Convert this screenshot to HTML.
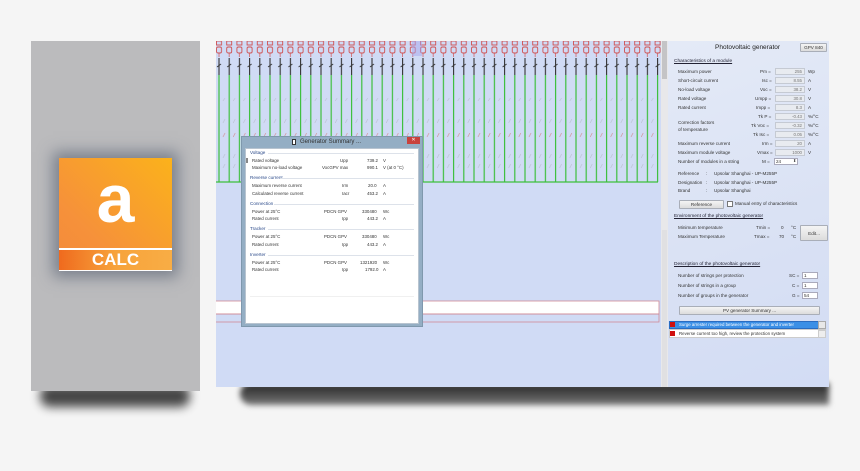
<!DOCTYPE html>
<html><head><meta charset="utf-8">
<style>
*{margin:0;padding:0;box-sizing:border-box}
body{width:860px;height:471px;background:#f5f5f5;position:relative;overflow:hidden;font-family:"Liberation Sans",sans-serif}
.a{position:absolute}
.t{position:absolute;font-size:4.6px;color:#333;white-space:nowrap;line-height:1}
.h{position:absolute;font-size:4.8px;color:#223;text-decoration:underline;white-space:nowrap;line-height:1}
.box{position:absolute;background:#e8ebf0;border:1px solid #c5cad3;height:7px;font-size:4.4px;color:#777;text-align:right;padding-right:2px;line-height:6px}
.btn{position:absolute;background:linear-gradient(#f4f4f4,#dcdcdc);border:1px solid #a9aeb8;border-radius:1px;font-size:4.6px;color:#333;text-align:center}
.dt{position:absolute;font-size:4.4px;color:#333;white-space:nowrap;line-height:1}
.ds{position:absolute;font-size:4.6px;color:#2b4a8a;white-space:nowrap;line-height:1}
.dl{position:absolute;height:1px;background:#dde2ea}
</style></head><body>
<!-- left panel -->
<div class="a" style="left:40px;top:385px;width:150px;height:22px;background:#333;filter:blur(5px);border-radius:10px;opacity:.9"></div>
<div class="a" style="left:31px;top:41px;width:169px;height:350px;background:#bbbbbd"></div>
<div class="a" style="left:59px;top:158px;width:113px;height:113px;box-shadow:0 0 14px 6px rgba(70,80,100,.55)"></div>
<div class="a" style="left:59px;top:158px;width:113px;height:113px;background:linear-gradient(225deg,#fbb21b,#f6913a 70%,#f38a3c)"></div>
<div class="a" style="left:59px;top:164px;width:113px;height:70px;text-align:center;color:#fff;font-weight:bold;font-size:68px;line-height:70px;font-family:'Liberation Sans',sans-serif">a</div>
<div class="a" style="left:59px;top:248px;width:113px;height:2px;background:#fff"></div>
<div class="a" style="left:59px;top:250px;width:113px;height:20px;background:linear-gradient(90deg,#ef6a1e,#f7a33b 50%,#f8ad45);color:#fff;font-weight:bold;font-size:17px;text-align:center;line-height:20px">CALC</div>
<div class="a" style="left:59px;top:270px;width:113px;height:1px;background:#fff"></div>

<!-- main shadow -->
<div class="a" style="left:240px;top:383px;width:589px;height:22px;background:linear-gradient(#222,#777);filter:blur(3px);border-radius:40px 0 0 40px"></div>
<!-- main screen -->
<div class="a" style="left:216px;top:41px;width:445px;height:346px;background:#d0dbf5;overflow:hidden">
<svg width="445" height="346" style="position:absolute;left:0;top:0">
<defs>
<pattern id="p" x="0" y="0" width="10.2" height="346" patternUnits="userSpaceOnUse">
<rect x="0.5" y="0" width="5" height="4" fill="none" stroke="#d05050" stroke-width="0.9"/>
<rect x="0.5" y="6" width="5" height="6" rx="1.5" fill="none" stroke="#d05050" stroke-width="0.9"/>
<line x1="3" y1="12" x2="3" y2="16" stroke="#d05050" stroke-width="0.7"/>
<line x1="3" y1="17" x2="3" y2="34" stroke="#333" stroke-width="1.1"/>
<line x1="1" y1="26" x2="5" y2="23" stroke="#333" stroke-width="0.8"/>
<line x1="3" y1="34" x2="3" y2="141" stroke="#3cbf3c" stroke-width="1.2"/>
<line x1="7" y1="60" x2="9" y2="57" stroke="#b8c0cc" stroke-width="0.6"/>
<line x1="7" y1="82" x2="9" y2="78" stroke="#b8c0cc" stroke-width="0.6"/>
<line x1="7" y1="96" x2="9" y2="92" stroke="#d08a8a" stroke-width="0.6"/>
<line x1="7" y1="117" x2="9" y2="113" stroke="#b8c0cc" stroke-width="0.6"/>
<line x1="7" y1="127" x2="9" y2="123" stroke="#b8c0cc" stroke-width="0.6"/>
</pattern>
</defs>
<rect x="0" y="0" width="445" height="145" fill="url(#p)"/>
<rect x="196" y="0" width="10" height="15" fill="#a8a8ee" opacity=".5"/>
<line x1="0" y1="141" x2="442" y2="141" stroke="#3cbf3c" stroke-width="1.2"/>
<rect x="-2" y="260" width="445" height="13" fill="#fff" stroke="#d08a96" stroke-width="0.8"/>
<rect x="-2" y="273" width="445" height="8" fill="none" stroke="#d08a96" stroke-width="0.8"/>
</svg>
</div>
<div class="a" style="left:661px;top:41px;width:7px;height:346px;background:#e8e8ea"></div>
<div class="a" style="left:662px;top:41px;width:5px;height:38px;background:#c4c4c6"></div>
<div class="a" style="left:662px;top:230px;width:5px;height:157px;background:#e0e0e2"></div>

<!-- dialog -->
<div class="a" style="left:241px;top:136px;width:182px;height:191px;background:#94aec4;border:1px solid #7f98ad"></div>
<div class="a" style="left:300px;top:139px;font-size:6px;color:#333">Generator Summary ...</div>
<div class="a" style="left:292px;top:139px;width:4px;height:6px;background:#fff;border:0.5px solid #333"></div>
<div class="a" style="left:407px;top:137px;width:13px;height:7px;background:#c9423c;color:#fff;font-size:5px;text-align:center;line-height:7px">✕</div>
<div class="a" style="left:245px;top:148px;width:174px;height:176px;background:#fff;border:1px solid #b8c4d0"></div>
<div class="ds" style="left:250px;top:151px">Voltage</div><div class="dl" style="left:268px;top:153px;width:146px"></div>
<div class="a" style="left:246px;top:158px;width:2px;height:5px;border:0.5px solid #888"></div>
<div class="dt" style="left:252px;top:159px">Rated voltage</div><div class="dt" style="left:340px;top:159px">Upp</div><div class="dt" style="left:367px;top:159px">739.2</div><div class="dt" style="left:383px;top:159px">V</div>
<div class="dt" style="left:252px;top:166px">Maximum no-load voltage</div><div class="dt" style="left:322px;top:166px">VocGPV max</div><div class="dt" style="left:367px;top:166px">990.1</div><div class="dt" style="left:383px;top:166px">V (at 0 °C)</div>
<div class="ds" style="left:250px;top:176px">Reverse current</div><div class="dl" style="left:280px;top:178px;width:134px"></div>
<div class="dt" style="left:252px;top:184px">Maximum reverse current</div><div class="dt" style="left:342px;top:184px">Irm</div><div class="dt" style="left:368px;top:184px">20.0</div><div class="dt" style="left:383px;top:184px">A</div>
<div class="dt" style="left:252px;top:192px">Calculated reverse current</div><div class="dt" style="left:342px;top:192px">Iacr</div><div class="dt" style="left:367px;top:192px">453.2</div><div class="dt" style="left:383px;top:192px">A</div>
<div class="ds" style="left:250px;top:202px">Connection</div><div class="dl" style="left:274px;top:204px;width:140px"></div>
<div class="dt" style="left:252px;top:210px">Power at 25°C</div><div class="dt" style="left:324px;top:210px">PDCN GPV</div><div class="dt" style="left:362px;top:210px">330480</div><div class="dt" style="left:383px;top:210px">Wc</div>
<div class="dt" style="left:252px;top:217px">Rated current</div><div class="dt" style="left:342px;top:217px">Ipp</div><div class="dt" style="left:367px;top:217px">443.2</div><div class="dt" style="left:383px;top:217px">A</div>
<div class="ds" style="left:250px;top:227px">Tracker</div><div class="dl" style="left:268px;top:229px;width:146px"></div>
<div class="dt" style="left:252px;top:235px">Power at 25°C</div><div class="dt" style="left:324px;top:235px">PDCN GPV</div><div class="dt" style="left:362px;top:235px">330480</div><div class="dt" style="left:383px;top:235px">Wc</div>
<div class="dt" style="left:252px;top:243px">Rated current</div><div class="dt" style="left:342px;top:243px">Ipp</div><div class="dt" style="left:367px;top:243px">443.2</div><div class="dt" style="left:383px;top:243px">A</div>
<div class="ds" style="left:250px;top:253px">Inverter</div><div class="dl" style="left:268px;top:255px;width:146px"></div>
<div class="dt" style="left:252px;top:261px">Power at 25°C</div><div class="dt" style="left:324px;top:261px">PDCN GPV</div><div class="dt" style="left:360px;top:261px">1321920</div><div class="dt" style="left:383px;top:261px">Wc</div>
<div class="dt" style="left:252px;top:268px">Rated current</div><div class="dt" style="left:342px;top:268px">Ipp</div><div class="dt" style="left:365px;top:268px">1792.0</div><div class="dt" style="left:383px;top:268px">A</div>
<div class="dl" style="left:250px;top:296px;width:164px;background:#f0f0f0"></div>

<!-- right panel -->
<div class="a" style="left:668px;top:41px;width:161px;height:346px;background:linear-gradient(160deg,#e4eaf7,#d9e1f4 60%,#d2dcf4)"></div>
<div class="t" style="left:715px;top:45px;font-size:6.5px;color:#222">Photovoltaic generator</div>
<div class="btn" style="left:800px;top:43px;width:27px;height:9px;line-height:8px;font-size:4.6px">GPV 840</div>
<div class="h" style="left:674px;top:60px">Characteristics of a module</div>
<div class="t" style="left:678px;top:70px">Maximum power</div><div class="t" style="left:760px;top:70px">Pm =</div><div class="box" style="left:775px;top:68px;width:30px">255</div><div class="t" style="left:808px;top:70px">Wp</div>
<div class="t" style="left:678px;top:79px">Short-circuit current</div><div class="t" style="left:762px;top:79px">Isc =</div><div class="box" style="left:775px;top:77px;width:30px">8.55</div><div class="t" style="left:808px;top:79px">A</div>
<div class="t" style="left:678px;top:88px">No-load voltage</div><div class="t" style="left:760px;top:88px">Voc =</div><div class="box" style="left:775px;top:86px;width:30px">38.2</div><div class="t" style="left:808px;top:88px">V</div>
<div class="t" style="left:678px;top:97px">Rated voltage</div><div class="t" style="left:755px;top:97px">Umpp =</div><div class="box" style="left:775px;top:95px;width:30px">30.8</div><div class="t" style="left:808px;top:97px">V</div>
<div class="t" style="left:678px;top:106px">Rated current</div><div class="t" style="left:756px;top:106px">Impp =</div><div class="box" style="left:775px;top:104px;width:30px">8.3</div><div class="t" style="left:808px;top:106px">A</div>
<div class="t" style="left:758px;top:115px">Tk P =</div><div class="box" style="left:775px;top:113px;width:30px">-0.43</div><div class="t" style="left:808px;top:115px">%/°C</div>
<div class="t" style="left:678px;top:121px">Correction factors</div><div class="t" style="left:678px;top:128px">of temperature</div>
<div class="t" style="left:751px;top:124px">Tk Voc =</div><div class="box" style="left:775px;top:122px;width:30px">-0.32</div><div class="t" style="left:808px;top:124px">%/°C</div>
<div class="t" style="left:753px;top:133px">Tk Isc =</div><div class="box" style="left:775px;top:131px;width:30px">0.05</div><div class="t" style="left:808px;top:133px">%/°C</div>
<div class="t" style="left:678px;top:142px">Maximum reverse current</div><div class="t" style="left:762px;top:142px">Irm =</div><div class="box" style="left:775px;top:140px;width:30px">20</div><div class="t" style="left:808px;top:142px">A</div>
<div class="t" style="left:678px;top:151px">Maximum module voltage</div><div class="t" style="left:757px;top:151px">Vmax =</div><div class="box" style="left:775px;top:149px;width:30px">1000</div><div class="t" style="left:808px;top:151px">V</div>
<div class="t" style="left:678px;top:160px">Number of modules in a string</div><div class="t" style="left:762px;top:160px">M =</div><div class="a" style="left:774px;top:158px;width:24px;height:7px;background:#fff;border:1px solid #aab"></div><div class="t" style="left:776px;top:160px">24</div><div class="t" style="left:793px;top:159px;font-size:4px">⬍</div>
<div class="t" style="left:678px;top:172px">Reference</div><div class="t" style="left:706px;top:172px">:</div><div class="t" style="left:714px;top:172px">Upsolar Shanghai - UP-M255P</div>
<div class="t" style="left:678px;top:181px">Designation</div><div class="t" style="left:706px;top:181px">:</div><div class="t" style="left:714px;top:181px">Upsolar Shanghai - UP-M255P</div>
<div class="t" style="left:678px;top:189px">Brand</div><div class="t" style="left:706px;top:189px">:</div><div class="t" style="left:714px;top:189px">Upsolar Shanghai</div>
<div class="btn" style="left:679px;top:200px;width:45px;height:9px;line-height:8px">Reference</div>
<div class="a" style="left:727px;top:201px;width:6px;height:6px;background:#fff;border:1px solid #777"></div>
<div class="t" style="left:735px;top:202px">Manual entry of characteristics</div>
<div class="h" style="left:674px;top:215px">Environment of the photovoltaic generator</div>
<div class="t" style="left:678px;top:226px">Minimum temperature</div><div class="t" style="left:756px;top:226px">Tmin =</div><div class="t" style="left:781px;top:226px">0</div><div class="t" style="left:791px;top:226px">°C</div>
<div class="t" style="left:678px;top:235px">Maximum Temperature</div><div class="t" style="left:754px;top:235px">Tmax =</div><div class="t" style="left:779px;top:235px">70</div><div class="t" style="left:791px;top:235px">°C</div>
<div class="btn" style="left:800px;top:225px;width:28px;height:16px;line-height:15px">Edit...</div>
<div class="h" style="left:674px;top:263px">Description of the photovoltaic generator</div>
<div class="t" style="left:678px;top:274px">Number of strings per protection</div><div class="t" style="left:789px;top:274px">SC =</div><div class="a" style="left:802px;top:272px;width:16px;height:7px;background:#fff;border:1px solid #aab"></div><div class="t" style="left:804px;top:274px">1</div>
<div class="t" style="left:678px;top:284px">Number of strings in a group</div><div class="t" style="left:792px;top:284px">C =</div><div class="a" style="left:802px;top:282px;width:16px;height:7px;background:#fff;border:1px solid #aab"></div><div class="t" style="left:804px;top:284px">1</div>
<div class="t" style="left:678px;top:294px">Number of groups in the generator</div><div class="t" style="left:792px;top:294px">G =</div><div class="a" style="left:802px;top:292px;width:16px;height:7px;background:#fff;border:1px solid #aab"></div><div class="t" style="left:804px;top:294px">54</div>
<div class="btn" style="left:679px;top:306px;width:141px;height:9px;line-height:8px">PV generator Summary ...</div>
<div class="a" style="left:669px;top:321px;width:157px;height:8px;background:#3b8fe6;border:1px solid #2a6cc0"></div>
<div class="a" style="left:670px;top:322px;width:5px;height:5px;background:#d01010"></div>
<div class="t" style="left:679px;top:323px;color:#fff;font-size:4.4px">Surge arrester required between the generator and inverter</div>
<div class="a" style="left:818px;top:321px;width:8px;height:8px;background:#e8e8e8;border:1px solid #aaa"></div>
<div class="a" style="left:669px;top:329px;width:157px;height:9px;background:#fff;border:1px solid #ccc"></div>
<div class="a" style="left:670px;top:331px;width:5px;height:5px;background:#d01010"></div>
<div class="t" style="left:679px;top:332px;font-size:4.4px">Reverse current too high, review the protection system</div>
<div class="a" style="left:818px;top:330px;width:8px;height:8px;background:#eee;border:1px solid #ccc"></div>
</body></html>
